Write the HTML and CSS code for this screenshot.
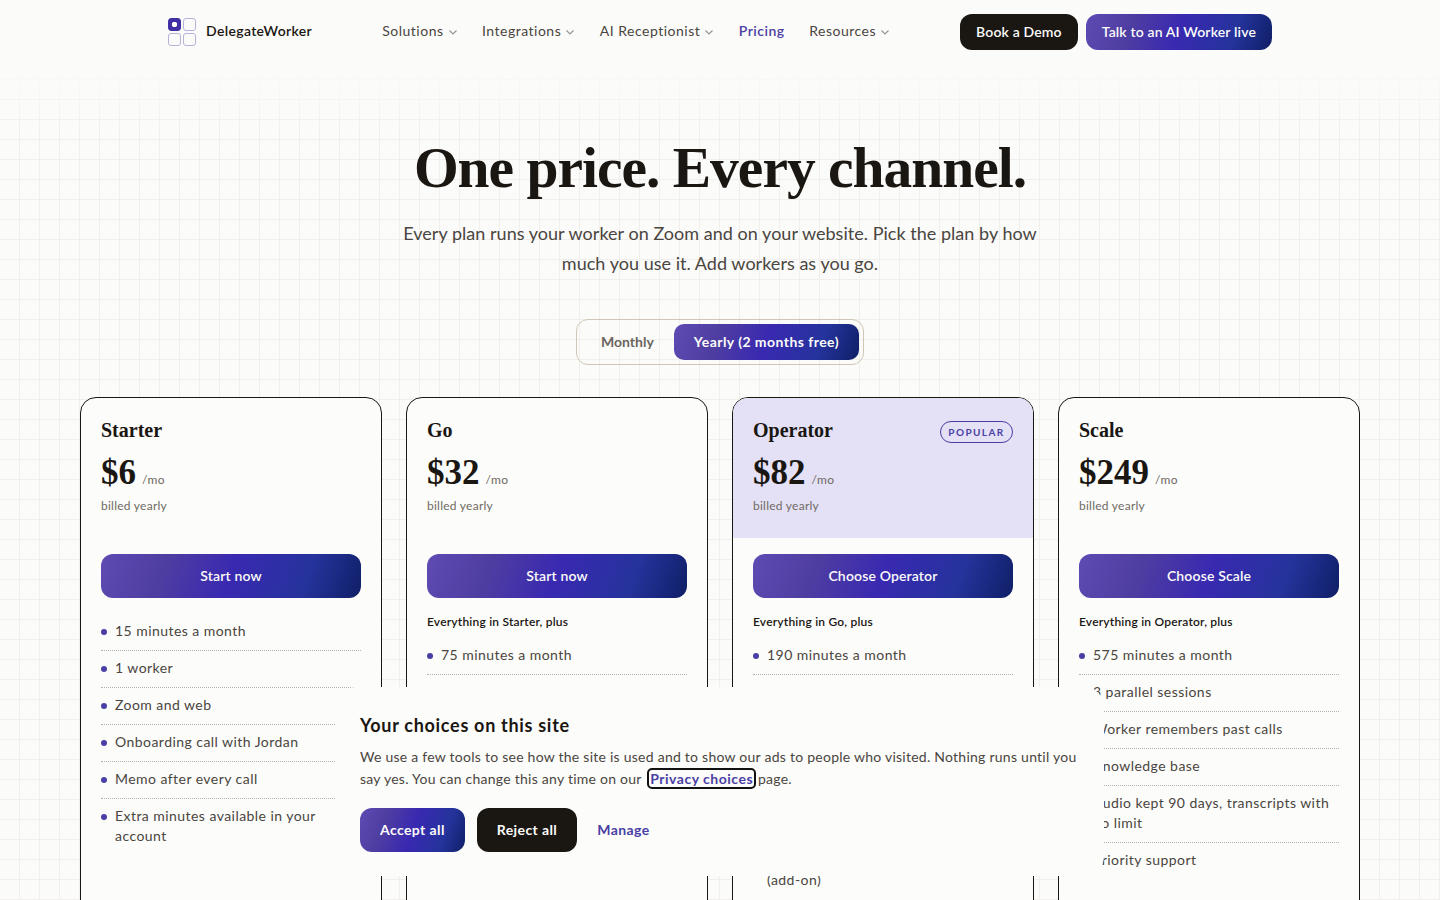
FILE: index.html
```html
<!DOCTYPE html>
<html lang="en">

<head>
  <meta charset="UTF-8">
  <meta name="viewport" content="width=device-width, initial-scale=1.0">
  <title>Pricing - DelegateWorker</title>
  <link rel="stylesheet" href="styles.css">
</head>

<body>

  <header class="site-header">
    <a class="brand" href="/">
      <span class="brand-mark">
        <span class="brand-cell brand-cell-on"></span>
        <span class="brand-cell"></span>
        <span class="brand-cell"></span>
        <span class="brand-cell"></span>
      </span>
      <span class="brand-name">DelegateWorker</span>
    </a>

    <nav class="main-nav">
      <a href="/solutions">Solutions
        <svg class="chevron" viewBox="0 0 10 10"><path d="M1.5 3.5 5 7l3.5-3.5"/></svg>
      </a>
      <a href="/integrations">Integrations
        <svg class="chevron" viewBox="0 0 10 10"><path d="M1.5 3.5 5 7l3.5-3.5"/></svg>
      </a>
      <a href="/receptionist">AI Receptionist
        <svg class="chevron" viewBox="0 0 10 10"><path d="M1.5 3.5 5 7l3.5-3.5"/></svg>
      </a>
      <a class="active" href="/pricing">Pricing</a>
      <a href="/resources">Resources
        <svg class="chevron" viewBox="0 0 10 10"><path d="M1.5 3.5 5 7l3.5-3.5"/></svg>
      </a>
    </nav>

    <div class="header-actions">
      <a class="btn btn-dark btn-small" href="/demo">Book a Demo</a>
      <a class="btn btn-brand btn-small" href="/live">Talk to an AI Worker live</a>
    </div>
  </header>

  <main class="pricing">
    <h1>One price. Every channel.</h1>
    <p class="lead">Every plan runs your worker on Zoom and on your website. Pick the plan by how much you use it. Add workers as you go.</p>

    <div class="billing-toggle">
      <button class="toggle-option">Monthly</button>
      <button class="toggle-option selected">Yearly (2 months free)</button>
    </div>

    <div class="plans">

      <section class="plan">
        <div class="plan-head">
          <div class="plan-title"><h2>Starter</h2></div>
          <p class="price"><strong>$6</strong> <span>/mo</span></p>
          <p class="billed">billed yearly</p>
        </div>
        <div class="plan-body">
          <a class="btn btn-brand btn-wide" href="/start">Start now</a>
          <ul class="features no-intro">
            <li>15 minutes a month</li>
            <li>1 worker</li>
            <li>Zoom and web</li>
            <li>Onboarding call with Jordan</li>
            <li>Memo after every call</li>
            <li>Extra minutes available in your account</li>
          </ul>
        </div>
      </section>

      <section class="plan">
        <div class="plan-head">
          <div class="plan-title"><h2>Go</h2></div>
          <p class="price"><strong>$32</strong> <span>/mo</span></p>
          <p class="billed">billed yearly</p>
        </div>
        <div class="plan-body">
          <a class="btn btn-brand btn-wide" href="/start">Start now</a>
          <p class="includes">Everything in Starter, plus</p>
          <ul class="features">
            <li>75 minutes a month</li>
            <li>2 workers</li>
            <li>Transcripts of every call</li>
            <li>Email support</li>
            <li>Audio kept 30 days</li>
          </ul>
        </div>
      </section>

      <section class="plan plan-popular">
        <div class="plan-head">
          <div class="plan-title"><h2>Operator</h2><span class="badge">Popular</span></div>
          <p class="price"><strong>$82</strong> <span>/mo</span></p>
          <p class="billed">billed yearly</p>
        </div>
        <div class="plan-body">
          <a class="btn btn-brand btn-wide" href="/start">Choose Operator</a>
          <p class="includes">Everything in Go, plus</p>
          <ul class="features">
            <li>190 minutes a month</li>
            <li>2 parallel sessions</li>
            <li>Custom worker voice</li>
            <li>Calendar booking</li>
            <li>Audio kept 60 days, transcripts with no limit</li>
            <li>Outbound calling on each worker (add-on)</li>
          </ul>
        </div>
      </section>

      <section class="plan">
        <div class="plan-head">
          <div class="plan-title"><h2>Scale</h2></div>
          <p class="price"><strong>$249</strong> <span>/mo</span></p>
          <p class="billed">billed yearly</p>
        </div>
        <div class="plan-body">
          <a class="btn btn-brand btn-wide" href="/start">Choose Scale</a>
          <p class="includes">Everything in Operator, plus</p>
          <ul class="features">
            <li>575 minutes a month</li>
            <li>3 parallel sessions</li>
            <li>Worker remembers past calls</li>
            <li>Knowledge base</li>
            <li>Audio kept 90 days, transcripts with no limit</li>
            <li>Priority support</li>
          </ul>
        </div>
      </section>

    </div>
  </main>

  <aside class="cookie-banner">
    <h3>Your choices on this site</h3>
    <p>We use a few tools to see how the site is used and to show our ads to people who visited. Nothing runs until you say yes. You can change this any time on our <a class="privacy-link" href="/privacy">Privacy choices</a> page.</p>
    <div class="cookie-actions">
      <button class="btn btn-brand btn-cookie">Accept all</button>
      <button class="btn btn-dark btn-cookie">Reject all</button>
      <button class="cookie-manage">Manage</button>
    </div>
  </aside>

</body>

</html>
```

FILE: styles.css
```css
html,
body {
  height: 100%;
  overflow: hidden;
}

body {
  margin: 0;
  font-family: 'Lato', 'Liberation Sans', sans-serif;
  background-color: #fbfbf9;
  color: #1a1612;
}

a {
  text-decoration: none;
  color: inherit;
}

button {
  font-family: inherit;
  border: none;
  cursor: pointer;
}

/* Header */
.site-header {
  height: 64px;
  box-sizing: border-box;
  padding: 0 168px;
  display: flex;
  align-items: center;
  justify-content: space-between;
}

.brand {
  display: flex;
  align-items: center;
  gap: 10px;
}

.brand-mark {
  display: grid;
  grid-template-columns: 13px 13px;
  grid-template-rows: 13px 13px;
  gap: 2px;
}

.brand-cell {
  box-sizing: border-box;
  border: 1px solid #b7b2dc;
  border-radius: 3px;
}

.brand-cell-on {
  background: radial-gradient(circle at center, #fff 2.5px, #3f31a3 3px);
  border-color: #3f31a3;
}

.brand-name {
  padding-bottom: 3px;
  font-size: 14px;
  font-weight: 600;
  letter-spacing: 0.35px;
}

.main-nav {
  display: flex;
  gap: 24.5px;
  padding-bottom: 3px;
  font-size: 14px;
  color: #4a4540;
  letter-spacing: 0.5px;
}

.main-nav a {
  display: flex;
  align-items: center;
  gap: 4px;
}

.main-nav a.active {
  color: #4a3fa5;
  font-weight: 600;
}

.chevron {
  width: 10px;
  height: 10px;
  margin-top: 2px;
  fill: none;
  stroke: #98938d;
  stroke-width: 1.1;
}

.header-actions {
  display: flex;
  gap: 8px;
}

/* Buttons */
.btn {
  display: flex;
  align-items: center;
  justify-content: center;
  box-sizing: border-box;
  padding-bottom: 2px;
  color: #fbfbf9;
  font-weight: 600;
  font-size: 14px;
  letter-spacing: 0.15px;
  border-radius: 12px;
}

.btn-dark {
  background-color: #1a1612;
}

.btn-brand {
  background-image: linear-gradient(110deg, #5f4bb3 0%, #4e3da1 25%, #3929b1 50%, #25339c 78%, #0f1f66 100%);
}

.btn-small {
  height: 36px;
  padding-left: 16px;
  padding-right: 16px;
}

.btn-wide {
  height: 44px;
}

.btn-cookie {
  height: 44px;
  padding-left: 20px;
  padding-right: 20px;
  font-weight: 700;
  letter-spacing: 0.4px;
}

/* Hero */
.pricing {
  padding: 72px 80px 0;
  background-color: #fbfbf9;
  background-image:
    linear-gradient(#fbfbf9 0, rgba(251, 251, 249, 0) 70px),
    linear-gradient(#f0efeb 1px, transparent 1px),
    linear-gradient(90deg, #f0efeb 1px, transparent 1px);
  background-size: 100% 100%, 20px 20px, 20px 20px;
  background-position: 0 0, 0 15px, 19px 0;
  text-align: center;
}

h1 {
  margin: 0;
  font-family: 'Liberation Serif', serif;
  font-size: 57.5px;
  line-height: 64px;
  font-weight: 700;
  letter-spacing: -1px;
}

.lead {
  margin: 18px auto 0;
  max-width: 660px;
  font-size: 18px;
  line-height: 30px;
  color: #4a4540;
  letter-spacing: 0.03px;
}

.billing-toggle {
  display: inline-flex;
  margin-top: 41px;
  padding: 4px;
  border: 1px solid #cfc7b6;
  border-radius: 12px;
}

.toggle-option {
  height: 36px;
  padding: 0 20px 2px;
  background: none;
  color: #6a655f;
  font-size: 14px;
  font-weight: 700;
  border-radius: 10px;
}

.toggle-option.selected {
  color: #fbfbf9;
  letter-spacing: 0.45px;
  background-image: linear-gradient(110deg, #5f4bb3 0%, #4e3da1 25%, #3929b1 50%, #25339c 78%, #0f1f66 100%);
}

/* Plans */
.plans {
  display: grid;
  grid-template-columns: repeat(4, 1fr);
  gap: 24px;
  margin-top: 32px;
  text-align: left;
}

.plan {
  background-color: #fcfcfa;
  border: 1px solid #1a1612;
  border-radius: 16px;
  overflow: hidden;
  padding-bottom: 24px;
}

.plan-head {
  height: 140px;
  box-sizing: border-box;
  padding: 20px 20px 0;
}

.plan-popular .plan-head {
  background-color: #e4e1f6;
}

.plan-title {
  display: flex;
  align-items: center;
  justify-content: space-between;
  height: 24px;
}

h2 {
  margin: 0;
  font-family: 'Liberation Serif', serif;
  font-size: 20px;
  font-weight: 700;
}

.badge {
  box-sizing: border-box;
  height: 22px;
  width: 73px;
  margin-top: 4px;
  padding-bottom: 1px;
  display: flex;
  align-items: center;
  justify-content: center;
  border: 1px solid #4a3fa5;
  border-radius: 11px;
  color: #4a3fa5;
  font-size: 10px;
  font-weight: 700;
  letter-spacing: 1.4px;
  text-transform: uppercase;
}

.price {
  margin: 11px 0 0;
  display: flex;
  align-items: baseline;
  gap: 6px;
  height: 40px;
}

.price strong {
  font-family: 'Liberation Serif', serif;
  font-size: 35px;
  line-height: 40px;
  font-weight: 700;
}

.price span {
  font-size: 12px;
  color: #6f6a64;
  letter-spacing: 0.4px;
}

.billed {
  margin: 4px 0 0;
  font-size: 12px;
  line-height: 18px;
  color: #6f6a64;
  letter-spacing: 0.25px;
}

.plan-body {
  padding: 16px 20px 0;
}

.includes {
  margin: 16px 0 0;
  font-size: 12px;
  line-height: 16px;
  font-weight: 600;
  letter-spacing: 0.2px;
  color: #1a1612;
}

.features {
  list-style: none;
  margin: 8px 0 0;
  padding: 0;
  font-size: 14px;
  line-height: 20px;
  color: #4a4540;
  letter-spacing: 0.45px;
}

.features.no-intro {
  margin-top: 16px;
}

.features li {
  position: relative;
  padding: 7px 0 9px 14px;
  border-bottom: 1px dotted #b5b1ab;
}

.features li:last-child {
  border-bottom: none;
}

.features li::before {
  content: '';
  position: absolute;
  left: 0;
  top: 14.5px;
  width: 6px;
  height: 6px;
  border-radius: 50%;
  background-color: #4a3fa5;
}

/* Cookie banner */
.cookie-banner {
  position: fixed;
  left: 336px;
  right: 336px;
  bottom: 24px;
  box-sizing: border-box;
  padding: 24px;
  background-color: #fcfcfa;
  border-radius: 20px;
}

.cookie-banner h3 {
  margin: 0;
  font-size: 18px;
  line-height: 28px;
  font-weight: 700;
  letter-spacing: 0.7px;
}

.cookie-banner p {
  margin: 7px 0 0;
  font-size: 14px;
  line-height: 22px;
  color: #4a4540;
  letter-spacing: 0.25px;
}

.privacy-link {
  margin-left: 4px;
  padding: 0 1px;
  color: #4a3fa5;
  font-weight: 700;
  letter-spacing: 0.5px;
  outline: 2px solid #111;
  border-radius: 3px;
}

.cookie-actions {
  display: flex;
  align-items: center;
  gap: 12px;
  margin-top: 18px;
}

.cookie-manage {
  background: none;
  padding: 0 8px 2px;
  color: #4a3fa5;
  font-size: 14px;
  font-weight: 700;
  letter-spacing: 0.4px;
}
```
